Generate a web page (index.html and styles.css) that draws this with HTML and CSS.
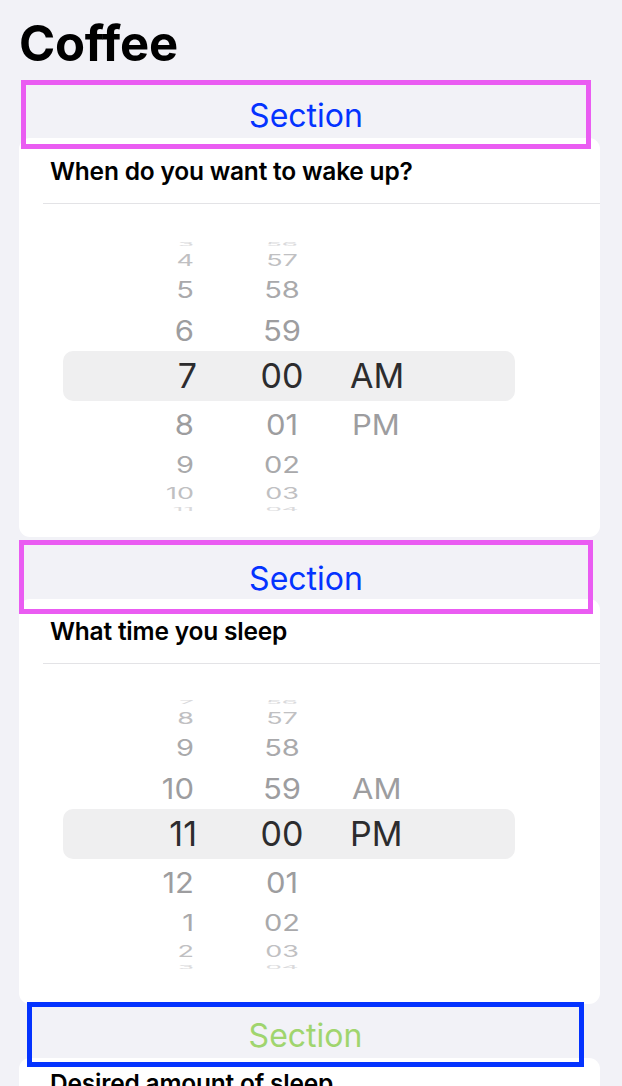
FILE: index.html
```html
<!DOCTYPE html>
<html lang="en">
<head>
<meta charset="utf-8">
<title>Coffee</title>
<link rel="stylesheet" href="styles.css">
</head>
<body>
<h1 class="title">Coffee</h1>

<div class="header header-1"><span>Section</span></div>
<section class="card card-1">
  <div class="label-row"><span>When do you want to wake up?</span></div>
  <div class="picker">
    <div class="wrow d4 top4"><div class="c h"><span>3</span></div><div class="c m"><span>56</span></div><div class="c a"></div></div>
    <div class="wrow d3 top3"><div class="c h"><span>4</span></div><div class="c m"><span>57</span></div><div class="c a"></div></div>
    <div class="wrow d2 top2"><div class="c h"><span>5</span></div><div class="c m"><span>58</span></div><div class="c a"></div></div>
    <div class="wrow d1 top1"><div class="c h"><span>6</span></div><div class="c m"><span>59</span></div><div class="c a"></div></div>
    <div class="wrow d0 sel"><div class="c h"><span>7</span></div><div class="c m"><span>00</span></div><div class="c a"><span>AM</span></div></div>
    <div class="wrow d1 bot1"><div class="c h"><span>8</span></div><div class="c m"><span>01</span></div><div class="c a"><span>PM</span></div></div>
    <div class="wrow d2 bot2"><div class="c h"><span>9</span></div><div class="c m"><span>02</span></div><div class="c a"></div></div>
    <div class="wrow d3 bot3"><div class="c h"><span>10</span></div><div class="c m"><span>03</span></div><div class="c a"></div></div>
    <div class="wrow d4 bot4"><div class="c h"><span>11</span></div><div class="c m"><span>04</span></div><div class="c a"></div></div>
  </div>
</section>

<div class="header header-2"><span>Section</span></div>
<section class="card card-2">
  <div class="label-row"><span>What time you sleep</span></div>
  <div class="picker">
    <div class="wrow d4 top4"><div class="c h"><span>7</span></div><div class="c m"><span>56</span></div><div class="c a"></div></div>
    <div class="wrow d3 top3"><div class="c h"><span>8</span></div><div class="c m"><span>57</span></div><div class="c a"></div></div>
    <div class="wrow d2 top2"><div class="c h"><span>9</span></div><div class="c m"><span>58</span></div><div class="c a"></div></div>
    <div class="wrow d1 top1"><div class="c h"><span>10</span></div><div class="c m"><span>59</span></div><div class="c a"><span>AM</span></div></div>
    <div class="wrow d0 sel"><div class="c h"><span>11</span></div><div class="c m"><span>00</span></div><div class="c a"><span>PM</span></div></div>
    <div class="wrow d1 bot1"><div class="c h"><span>12</span></div><div class="c m"><span>01</span></div><div class="c a"></div></div>
    <div class="wrow d2 bot2"><div class="c h"><span>1</span></div><div class="c m"><span>02</span></div><div class="c a"></div></div>
    <div class="wrow d3 bot3"><div class="c h"><span>2</span></div><div class="c m"><span>03</span></div><div class="c a"></div></div>
    <div class="wrow d4 bot4"><div class="c h"><span>3</span></div><div class="c m"><span>04</span></div><div class="c a"></div></div>
  </div>
</section>

<div class="header header-3"><span>Section</span></div>
<section class="card card-3">
  <div class="label-row"><span>Desired amount of sleep</span></div>
</section>
</body>
</html>
```

FILE: styles.css
```css
html, body {
  margin: 0;
  padding: 0;
}
body {
  background: #f2f2f7;
  font-family: Inter, "Liberation Sans", sans-serif;
  color: #000;
  width: 622px;
  height: 1086px;
  overflow: hidden;
}

.title {
  margin: 0;
  padding: 18px 0 0 19px;
  height: 62px;
  box-sizing: border-box;
  font-size: 49px;
  line-height: 52px;
  font-weight: 700;
  letter-spacing: -0.3px;
}

.header {
  position: relative;
  z-index: 1;
  box-sizing: border-box;
  border: 5px solid #ea5cf2;
  display: flex;
  align-items: center;
  justify-content: center;
  font-size: 32px;
  font-weight: 400;
  color: #0433ff;
}
.header span {
  padding-top: 2px;
}
.header-1 {
  margin: 18px 0 0 21px;
  width: 570px;
  height: 69px;
}
.header-2 {
  margin: 3px 0 0 19px;
  width: 574px;
  height: 74px;
}
.header-3 {
  margin: -2px 0 0 27px;
  width: 557px;
  height: 65px;
  border-color: #0433ff;
  color: #a0d56e;
}

.card {
  background: #fff;
  border-radius: 11px;
  margin-left: 19px;
  width: 581px;
}
.card-1 { margin-top: -11px; }
.card-2 { margin-top: -15px; }
.card-3 { margin-top: -9px; height: 60px; }

.label-row {
  margin-left: 24px;
  padding-left: 7px;
  height: 66px;
  box-sizing: border-box;
  border-bottom: 1px solid #e3e3e6;
  display: flex;
  align-items: center;
  font-size: 24.5px;
  font-weight: 600;
  letter-spacing: -0.2px;
}
.card-2 .label-row { height: 65px; }
.card-3 .label-row { height: 50px; border-bottom: none; }

.picker {
  padding: 32px 0 24px 0;
}
.card-2 .picker {
  padding: 30px 0 33px 0;
}

.wrow {
  display: grid;
  grid-template-columns: 200px 126px 1fr;
  grid-template-rows: 100%;
}
.wrow .c {
  display: flex;
  align-items: center;
  height: 100%;
  line-height: 1;
  min-height: 0;
}
.wrow .c span {
  display: inline-block;
}
.wrow .h { justify-content: flex-end; padding-right: 25px; }
.wrow .m { justify-content: center; }
.wrow .a { justify-content: flex-start; padding-left: 7px; }

.top4 { height: 16px; }
.top3 { height: 17px; }
.top2 { height: 40px; }
.top1 { height: 42px; }
.sel  { height: 50px; }
.bot1 { height: 46px; }
.bot2 { height: 34px; }
.bot3 { height: 24px; }
.bot4 { height: 8px; }

.sel {
  margin: 0 85px 0 44px;
  grid-template-columns: 156px 126px 1fr;
  background: #efeff0;
  border-radius: 10px;
}
.sel .h { padding-right: 22px; }
.sel .a { padding-left: 5px; }

.d0 { font-size: 34px; color: #2c2c2e; }
.d1 { font-size: 31px; color: #9d9d9f; }
.d2 { font-size: 29px; color: #a9a9ab; }
.d3 { font-size: 27px; color: #c0c0c2; }
.d4 { font-size: 26px; color: #dadadc; }
.d1 .c span { transform: scaleY(0.9); }
.d2 .c span { transform: scaleY(0.78); }
.d3 .c span { transform: scaleY(0.58); }
.d4 .c span { transform: scaleY(0.2); }
```
